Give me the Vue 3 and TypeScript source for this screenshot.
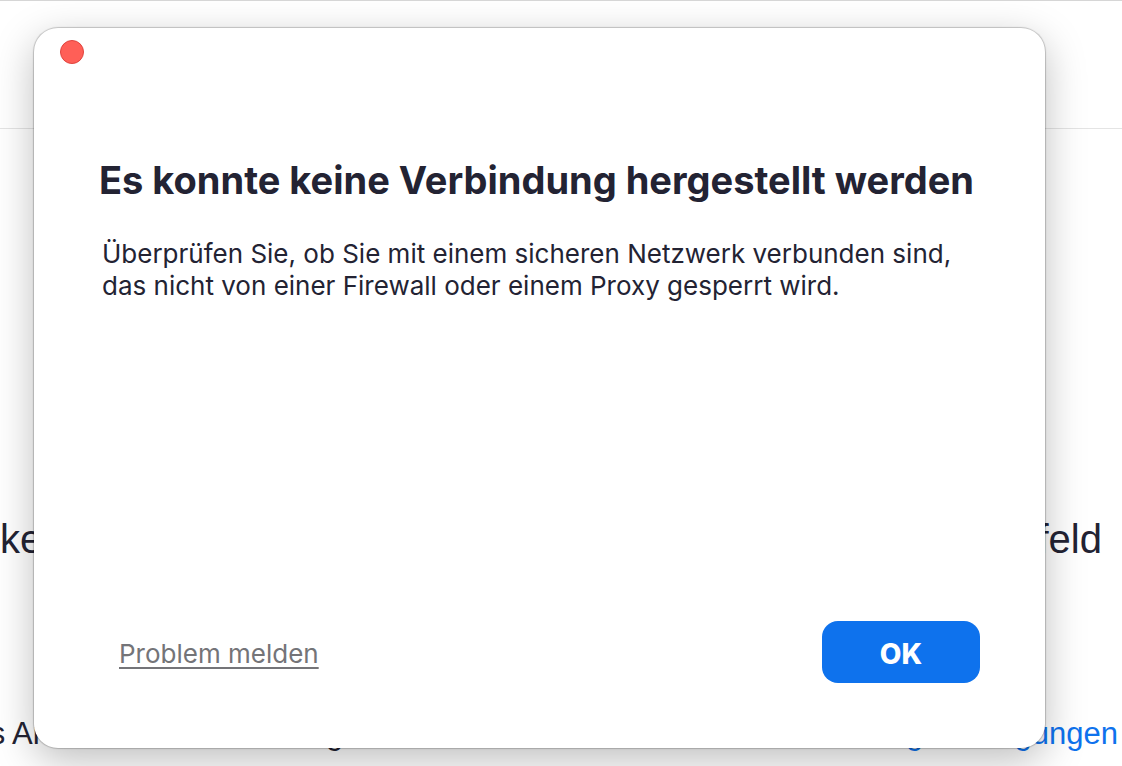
<script setup lang="ts">
import { ref } from 'vue'

const open = ref<boolean>(true)

function close(): void {
  open.value = false
}
</script>

<template>
  <div class="window">
    <main class="page">
      <header class="page-header"></header>
      <div class="caption">
        <span class="caption-start">ke</span>
        <span>feld</span>
      </div>
      <div class="terms">
        <span class="terms-start"><span class="terms-word">s An</span><span>g</span></span>
        <a href="#">Nutzungsbedingungen</a>
      </div>
    </main>

    <div v-if="open" class="overlay">
      <section class="dialog" role="dialog" aria-labelledby="dialog-title" aria-describedby="dialog-text">
        <div class="titlebar">
          <button class="close" type="button" aria-label="Schließen" @click="close"></button>
        </div>
        <div class="content">
          <h1 id="dialog-title">Es konnte keine Verbindung hergestellt werden</h1>
          <p id="dialog-text">
            Überprüfen Sie, ob Sie mit einem sicheren Netzwerk verbunden sind,<br />
            das nicht von einer Firewall oder einem Proxy gesperrt wird.
          </p>
        </div>
        <footer class="actions">
          <a class="report" href="#">Problem melden</a>
          <button class="ok" type="button" @click="close">OK</button>
        </footer>
      </section>
    </div>
  </div>
</template>

<style>
body {
  background: #fff;
}
</style>

<style scoped>
.window {
  display: grid;
  min-height: 100vh;
  box-sizing: border-box;
  overflow: hidden;
  border-top: 1px solid #d6d6d6;
  color: #232333;
  font-family: Inter, 'Liberation Sans', sans-serif;
}

.page,
.overlay {
  grid-area: 1 / 1;
  min-width: 0;
}

.page {
  font-family: 'Liberation Sans', sans-serif;
}

.page-header {
  height: 127px;
  border-bottom: 1px solid #e4e4e4;
}

.caption,
.terms {
  display: flex;
  justify-content: space-between;
}

.caption {
  padding: 386px 20px 0 0;
  font-size: 40px;
  line-height: 48px;
}

.terms {
  padding: 153px 4px 0 0;
  font-size: 31px;
  line-height: 36px;
}

.terms-start {
  display: flex;
  gap: 276px;
}

.terms-word {
  display: flex;
  justify-content: flex-end;
  width: 50px;
  white-space: nowrap;
}

.terms a {
  color: #0e72ed;
  text-decoration: none;
}

.overlay {
  z-index: 1;
  display: flex;
  padding: 27px 77px 18px 34px;
}

.dialog {
  display: flex;
  flex: 1;
  flex-direction: column;
  box-sizing: border-box;
  min-width: 0;
  border-radius: 24px;
  background: #fff;
  box-shadow:
    0 0 1px 1px rgba(0, 0, 0, 0.2),
    0 12px 40px rgba(0, 0, 0, 0.26);
}

.titlebar {
  display: flex;
  padding: 12px 26px;
}

.close {
  width: 24px;
  height: 24px;
  padding: 0;
  border: 1px solid #e0443e;
  border-radius: 50%;
  background: #ff5f57;
}

.content {
  flex: 1;
  padding: 80px 65px 0;
}

h1 {
  margin: 0;
  font-size: 38px;
  font-weight: 700;
  line-height: 48px;
}

p {
  margin: 34px 0 0;
  padding-left: 3px;
  font-size: 26px;
  line-height: 32px;
}

.actions {
  display: flex;
  align-items: center;
  justify-content: space-between;
  padding: 0 65px 65px 85px;
}

.report,
.ok {
  padding: 4px 0 0;
}

.report {
  color: #747478;
  font-size: 26px;
  line-height: 32px;
  text-decoration: underline;
  text-decoration-thickness: 2px;
  text-underline-offset: 4px;
}

.ok {
  width: 158px;
  height: 62px;
  border: 0;
  border-radius: 16px;
  background: #0e72ed;
  color: #fff;
  font-family: inherit;
  font-size: 28px;
  font-weight: 800;
}
</style>
